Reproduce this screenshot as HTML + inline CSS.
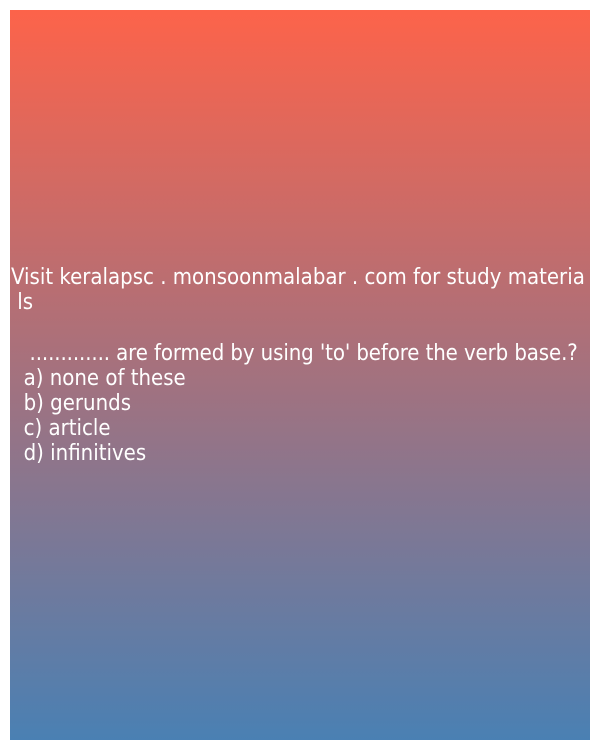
<!DOCTYPE html>
<html><head><meta charset="utf-8"><style>
html,body{margin:0;padding:0;background:#fff;width:600px;height:750px;overflow:hidden}
.box{position:absolute;left:10px;top:10px;width:580px;height:730px;background:linear-gradient(#fd634a,#4a80b3)}
.t{position:absolute;left:11px;color:#fff;font-family:"DejaVu Sans Condensed","DejaVu Sans","Liberation Sans",sans-serif;font-size:22px;line-height:25px;white-space:pre}
</style></head><body>
<div class="box"></div>
<div class="t" style="top:265px">Visit keralapsc . monsoonmalabar . com for study materia</div>
<div class="t" style="top:290px"> ls</div>
<div class="t" style="top:341px;letter-spacing:-0.1px">   ............. are formed by using 'to' before the verb base.?</div>
<div class="t" style="top:366px">  a) none of these</div>
<div class="t" style="top:391px">  b) gerunds</div>
<div class="t" style="top:416px">  c) article</div>
<div class="t" style="top:441px">  d) infinitives</div>
</body></html>
